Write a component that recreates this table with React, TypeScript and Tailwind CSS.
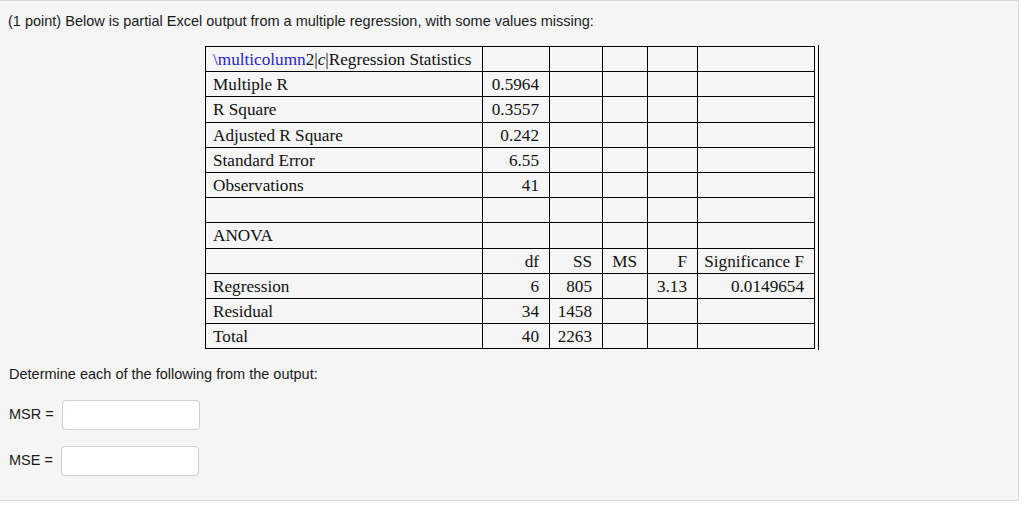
const rows: string[][] = [
  ["", "", "", "", "", ""],
  ["Multiple R", "0.5964", "", "", "", ""],
  ["R Square", "0.3557", "", "", "", ""],
  ["Adjusted R Square", "0.242", "", "", "", ""],
  ["Standard Error", "6.55", "", "", "", ""],
  ["Observations", "41", "", "", "", ""],
  ["", "", "", "", "", ""],
  ["ANOVA", "", "", "", "", ""],
  ["", "df", "SS", "MS", "F", "Significance F"],
  ["Regression", "6", "805", "", "3.13", "0.0149654"],
  ["Residual", "34", "1458", "", "", ""],
  ["Total", "40", "2263", "", "", ""],
];

function AnswerRow({ label }: { label: string }) {
  return (
    <div className="flex items-center">
      <span>{label}</span>
      <input
        type="text"
        className="ml-[8px] h-[30px] w-[138px] rounded-[4px] border border-[#cfcfcf] bg-white outline-none"
      />
    </div>
  );
}

export default function App() {
  return (
    <div className="h-[508px] w-[1024px] bg-white">
      <div
        className="h-[501px] w-[1019px] border-r border-b border-t border-[#dcdcdc] bg-[#f5f5f5] pl-[8px] text-[14.5px] text-[#1a1a1a]"
        style={{ fontFamily: '"Liberation Sans", Arial, sans-serif' }}
      >
        <p className="pt-[10px] leading-[20px]">
          (1 point) Below is partial Excel output from a multiple regression, with some values missing:
        </p>

        <div className="ml-[197px] mt-[14px] w-fit border-r border-black py-px pr-[3px]">
          <table
            className="w-[609px] table-fixed border-collapse text-[17.2px] text-[#111]"
            style={{ fontFamily: '"Liberation Serif", "Times New Roman", serif' }}
          >
            <colgroup>
              <col className="w-[277px]" />
              <col className="w-[67px]" />
              <col className="w-[53px]" />
              <col className="w-[45px]" />
              <col className="w-[50px]" />
              <col className="w-[117px]" />
            </colgroup>
            <tbody>
              {rows.map((r, i) => (
                <tr key={i} className="h-[25.2px]">
                  {r.map((c, j) => (
                    <td
                      key={j}
                      className={
                        j === 0
                          ? "border border-black px-[7px] pt-[2px] pb-0 text-left leading-[18px] whitespace-nowrap"
                          : "border border-black pl-[4px] pr-[10px] pt-[2px] pb-0 text-right leading-[18px] whitespace-nowrap"
                      }
                    >
                      {i === 0 && j === 0 ? (
                        <>
                          <span className="text-[#2626c6]">\multicolumn</span>2|<i>c</i>|Regression Statistics
                        </>
                      ) : (
                        c
                      )}
                    </td>
                  ))}
                </tr>
              ))}
            </tbody>
          </table>
        </div>

        <p className="mt-[14px] pl-px leading-[20px]">Determine each of the following from the output:</p>

        <div className="mt-[16px] flex flex-col gap-[16px] pl-px">
          <AnswerRow label="MSR =" />
          <AnswerRow label="MSE =" />
        </div>
      </div>
    </div>
  );
}
